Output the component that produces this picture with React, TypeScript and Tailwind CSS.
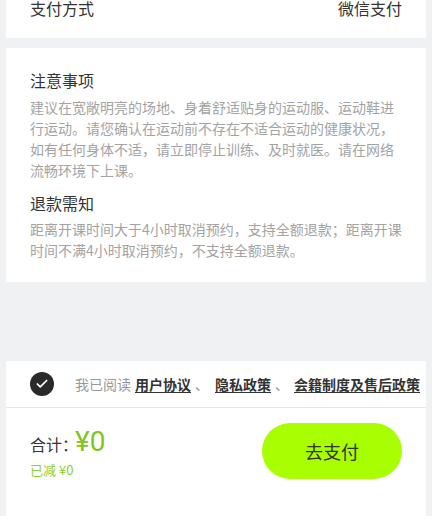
import { Check } from "lucide-react";

const font = { fontFamily: '"Noto Sans CJK SC", Roboto, sans-serif' };

export default function App() {
  return (
    <div
      className="w-[432px] h-[516px] overflow-hidden bg-[#f0f1f3] px-[6px] flex flex-col"
      style={font}
    >
      {/* payment method (scrolled, cut at top) */}
      <div className="h-[38px] bg-white px-6 flex justify-between items-start text-[16px] text-[#333]">
        <span className="leading-[16px]">支付方式</span>
        <span className="leading-[16px]">微信支付</span>
      </div>

      {/* notices */}
      <div className="mt-[10px] bg-white px-6 pt-5 pb-[21px]">
        <div className="text-[16px] leading-[24px] text-[#333]">注意事项</div>
        <p className="mt-[5px] text-[14px] leading-[21px] text-[#a3a3a3]">
          建议在宽敞明亮的场地、身着舒适贴身的运动服、运动鞋进行运动。请您确认在运动前不存在不适合运动的健康状况，如有任何身体不适，请立即停止训练、及时就医。请在网络流畅环境下上课。
        </p>
        <div className="mt-[10px] text-[16px] leading-[24px] text-[#333]">退款需知</div>
        <p className="mt-[4px] text-[14px] leading-[21px] text-[#a3a3a3]">
          距离开课时间大于4小时取消预约，支持全额退款；距离开课时间不满4小时取消预约，不支持全额退款。
        </p>
      </div>

      <div className="flex-1" />

      {/* agreement */}
      <div className="h-[47px] bg-white border-b border-[#e6e7ea] px-6 flex items-center text-[14px] whitespace-nowrap">
        <span className="w-6 h-6 rounded-full bg-[#2a2a2a] flex items-center justify-center shrink-0">
          <Check className="w-[14px] h-[14px] text-white" strokeWidth={3} />
        </span>
        <span className="ml-[21px] text-[#999]">我已阅读</span>
        <span className="ml-1 font-bold text-[#333] underline underline-offset-2">用户协议</span>
        <span className="ml-1 text-[#999]">、</span>
        <span className="ml-[6px] font-bold text-[#333] underline underline-offset-2">隐私政策</span>
        <span className="ml-1 text-[#999]">、</span>
        <span className="ml-[5px] font-bold text-[#333] underline underline-offset-2">会籍制度及售后政策</span>
      </div>

      {/* footer */}
      <div className="h-[108px] bg-white px-6 flex items-start justify-between">
        <div className="pt-[16px]">
          <div className="flex items-baseline">
            <span className="text-[16px] text-[#333]">合计：</span>
            <span className="-ml-[3px] text-[28px] leading-[36px] text-[#80c61c]" style={{ fontFamily: "Roboto, sans-serif" }}>
              ¥0
            </span>
          </div>
          <div className="mt-[1px] text-[13px] leading-[18px] text-[#8ccf35]">已减 ¥0</div>
        </div>
        <button className="mt-[15px] w-[140px] h-[56px] rounded-full bg-[#a8ff00] text-[18px] text-[#333]">
          去支付
        </button>
      </div>
    </div>
  );
}
